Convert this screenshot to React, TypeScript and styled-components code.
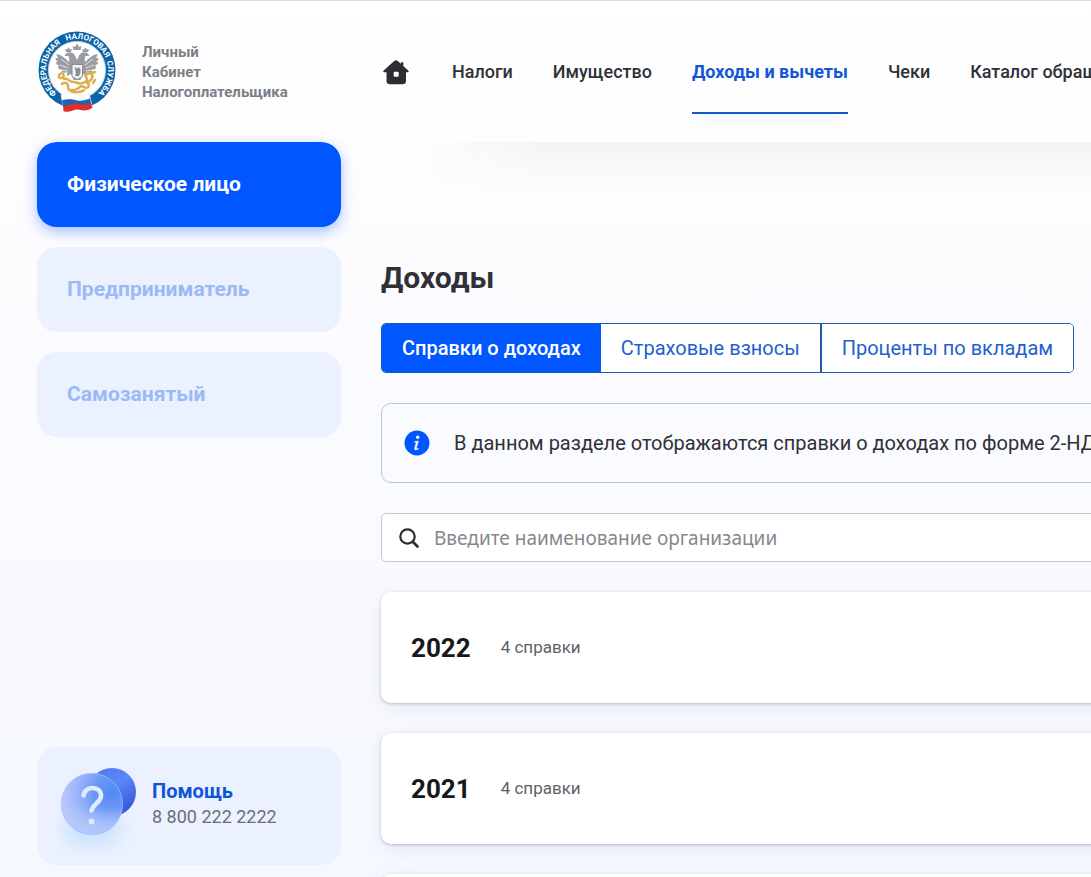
import React from "react";
import styled, { createGlobalStyle, css } from "styled-components";

const Global = createGlobalStyle`
  *, *::before, *::after { box-sizing: border-box; }
  html { min-height: 100%; background: linear-gradient(#ffffff 0, #fcfcff 30%, #f5f8ff 100%); }
  body {
    margin: 0;
    overflow: hidden;
    font-family: Roboto, "Liberation Sans", sans-serif;
    color: #2f3136;
  }
  button, input { font-family: inherit; }
  a { text-decoration: none; color: inherit; }
`;

const Page = styled.div`
  height: 100vh;
  min-width: 1400px;
  display: grid;
  grid-template-columns: 341px minmax(0, 1fr);
  grid-template-rows: minmax(0, 1fr);
  column-gap: 40px;
  padding-right: 40px;
  border-top: 1px solid #dcdddf;
  overflow: hidden;
`;

const Sidebar = styled.aside`
  display: flex;
  flex-direction: column;
  min-height: 0;
  padding: 0 0 12px 37px;
`;

const Brand = styled.a`
  display: flex;
  align-items: center;
  gap: 26px;
  height: 141px;
  flex: none;
`;

const BrandName = styled.span`
  font-size: 15px;
  line-height: 20px;
  font-weight: 700;
  color: #7c7f85;
`;

const RoleList = styled.nav`
  display: flex;
  flex-direction: column;
  gap: 20px;
`;

const Role = styled.button<{ $active?: boolean }>`
  height: 85px;
  padding: 0 30px 2px;
  border: 0;
  border-radius: 20px;
  text-align: left;
  font-size: 21px;
  font-weight: 700;
  color: #9bbaf5;
  background: #ebf1fe;
  ${(p) =>
    p.$active &&
    css`
      color: #fff;
      background: #0057ff;
      box-shadow: 0 5px 14px rgba(0, 87, 255, 0.35);
    `}
`;

const HelpCard = styled.a`
  display: flex;
  align-items: center;
  gap: 16px;
  height: 118px;
  margin-top: auto;
  padding-left: 18px;
  border-radius: 20px;
  background: #ebf1fe;
  flex: none;
`;

const HelpText = styled.span`
  display: flex;
  flex-direction: column;
  padding-bottom: 4px;
  font-size: 18px;
  line-height: 26px;
  color: #6b6e75;
`;

const HelpTitle = styled.strong`
  font-size: 20px;
  font-weight: 700;
  color: #0f55d8;
`;

const Main = styled.main`
  min-width: 0;
`;

const TopNav = styled.nav`
  display: flex;
  align-items: center;
  gap: 40px;
  height: 141px;
  white-space: nowrap;
`;

const NavLink = styled.a<{ $active?: boolean }>`
  display: flex;
  align-items: center;
  height: 84px;
  padding-top: 2px;
  font-size: 18px;
  font-weight: 500;
  border-bottom: 2px solid transparent;
  ${(p) =>
    p.$active &&
    css`
      color: #1456d8;
      font-weight: 700;
      border-bottom-color: #1456cc;
      box-shadow: 0 14px 14px -8px rgba(0, 87, 255, 0.06);
    `}
`;

const HomeLink = styled.a`
  display: flex;
  margin-right: 1px;
`;

const NavShade = styled.div`
  height: 50px;
  margin: 0 -40px 0 40px;
  background: linear-gradient(rgba(40, 40, 50, 0.045), rgba(40, 40, 50, 0));
  mask-image: linear-gradient(90deg, transparent, #000 120px);
`;

const Title = styled.h1`
  margin: 66px 0 25px;
  font-size: 30px;
  line-height: 40px;
  font-weight: 700;
`;

const Tabs = styled.div`
  display: flex;
  width: fit-content;
  height: 50px;
  border: 1px solid #1b5cab;
  border-radius: 5px;
  overflow: hidden;
`;

const Tab = styled.button<{ $active?: boolean }>`
  padding: 0 20px;
  border: 0;
  border-right: 2px solid #1b5cab;
  font-size: 20px;
  background: #fff;
  color: #1f5fd0;
  &:last-child {
    border-right: 0;
  }
  ${(p) =>
    p.$active &&
    css`
      color: #fff;
      background: #0057ff;
      border-right: 0;
      font-weight: 500;
    `}
`;

const Notice = styled.div`
  display: flex;
  align-items: center;
  gap: 24px;
  height: 80px;
  margin-top: 30px;
  padding-left: 22px;
  border: 1px solid #b4c9dc;
  border-radius: 10px;
  font-size: 20px;
  white-space: nowrap;
`;

const Search = styled.label`
  display: flex;
  align-items: center;
  gap: 14px;
  height: 49px;
  margin-top: 30px;
  padding-left: 16px;
  border: 1px solid #c6c8cc;
  border-radius: 5px;
  background: #fff;
`;

const SearchInput = styled.input`
  flex: 1;
  padding: 0;
  border: 0;
  outline: 0;
  background: transparent;
  font-family: "Noto Sans", "Open Sans", sans-serif;
  font-size: 19px;
  &::placeholder {
    color: #85888c;
    opacity: 1;
  }
`;

const YearCard = styled.section`
  display: flex;
  align-items: center;
  gap: 30px;
  height: 111px;
  margin-top: 30px;
  padding-left: 30px;
  border-radius: 10px;
  background: #fff;
  box-shadow: 0 1px 3px rgba(20, 25, 40, 0.24), 0 5px 20px rgba(20, 25, 50, 0.07);
`;

const Year = styled.h2`
  margin: 0;
  font-size: 26px;
  font-weight: 700;
  color: #17181a;
`;

const Count = styled.span`
  padding-bottom: 2px;
  font-size: 17px;
  color: #5f6267;
`;

const Emblem = () => (
  <svg width="79" height="84" viewBox="0 0 79 84" role="img" aria-label="ФНС">
    <defs>
      <path id="ring" d="M19.700 63.400 A31 31 0 1 1 61.100 62.700" />
    </defs>
    <circle cx="40" cy="40" r="38.5" fill="#0b64a8" />
    <circle cx="40" cy="40" r="28.6" fill="#fff" stroke="#b9cfe2" strokeWidth="1" />
    <g fill="#fff" fontFamily="Roboto, sans-serif" fontSize="8" fontWeight="700">
      <text><textPath href="#ring">ФЕДЕРАЛЬНАЯ</textPath></text>
      <text><textPath href="#ring" startOffset="43%">НАЛОГОВАЯ</textPath></text>
      <text><textPath href="#ring" startOffset="77%">СЛУЖБА</textPath></text>
    </g>
    <g fill="#9a9da2">
      <path d="M38.500 27c-1-4-5-6-9-4l-2 3 4 0c1 2 1 4 0 6-3-4-7-7-12-8 0 2 1 3 2 4l-3 0c0 2 1 3 3 4l-3 0c1 2 2 3 4 4l-2 1c1 2 3 3 5 3l-1 2c2 1 4 1 6 0l-1 4 5-2 2 6h7l2-6 5 2-1-4c2 1 4 1 6 0l-1-2c2 0 4-1 5-3l-2-1c2-1 3-2 4-4l-3 0c2-1 3-2 3-4l-3 0c1-1 2-2 2-4-5 1-9 4-12 8-1-2-1-4 0-6l4 0-2-3c-4-2-8 0-9 4l-1.500 3z" />
      <path d="M36.500 20l-1-4 2.500 1 2-3.500 2 3.500 2.500-1-1 4zM29 22l-1-3 2 .4 1.500-2 1.500 2 2-.4-1 3zM46 22l-1-3 2 .4 1.500-2 1.500 2 2-.4-1 3z" />
    </g>
    <path d="M32 35l-8-6M31 38l-8-3M31 41l-7-1M48 35l8-6M49 38l8-3M49 41l7-1" stroke="#fff" strokeWidth=".7" />
    <g fill="none" stroke="#dfae4c" strokeWidth="2.500" strokeLinecap="round" strokeLinejoin="round">
      <path d="M22 45c3-4 6 0 4 2s-5 1-4-2M27 49c4-2 4 3 9 3s6 3 10 1 5-3 3-6 4-5 6-2-2 6-5 8" />
      <path d="M25 54c3-3 7 0 6 3s5 4 9 2 3-4 7-2 6-1 4-4M55 43l3-1M58 50l-2 3" />
      <path d="M32 60c4 3 11 3 15 0" />
    </g>
    <path d="M35 34.500h10.500v12l-5.300 3-5.200-3z" fill="#f4f4f4" stroke="#898c92" />
    <path d="M37.500 37l3 1.500 1-1.500 2 2 0 3-1.500 4h-4l1-3z" fill="#8b8f95" />
    <path d="M24 65c7-4 12-1 17 0 5 1 8 0 11-2l3 13c-6 4-10 1-15 1-5-1-8 4-13 3z" fill="#fff" stroke="#e3ebf3" strokeWidth=".8" />
    <path d="M25 70.500c6-2 11-1 15 0 6 1 9-1 13-2l1 5c-4 3-9 2-14 1-5-1-8 3-14 2z" fill="#1b63b4" />
    <path d="M26 75.500c6 1 9-3 14-2 5 1 10 2 14-1l1.500 5c-5 4-10 3-15 2-5 0-9 4-14 1.500z" fill="#da2f2c" />
  </svg>
);

const HomeIcon = () => (
  <svg width="30" height="28" viewBox="0 0 30 28" aria-hidden="true">
    <path d="M13.200 3a2.600 2.600 0 0 1 3.500 0l3.300 2.800V4.200h2.300v3.700l4.900 4.600c.9.900.5 1.800-.4 1.800H25V22.700a3.500 3.500 0 0 1-3.500 3.500H9A3.500 3.500 0 0 1 5.500 22.700v-8.400H3.200c-1 0-1.300-1-.5-1.800z" fill="#2c2e33" />
    <rect x="12.700" y="13.700" width="5" height="5" rx="1" fill="#fff" />
  </svg>
);

const InfoIcon = () => (
  <svg width="26" height="26" viewBox="0 0 26 26" aria-hidden="true">
    <circle cx="13" cy="13" r="12.500" fill="#0057ff" />
    <circle cx="13.700" cy="7.200" r="1.700" fill="#fff" />
    <path d="M10.800 11.600l1.800-.4h1.800L12.300 18c-.2 1.200.6 1 1.700.1l.5.5c-1.600 1.700-4.300 2-3.800-.7l1.600-5.600h-1.600z" fill="#fff" stroke="#fff" strokeWidth=".5" />
  </svg>
);

const SearchIcon = () => (
  <svg width="22" height="22" viewBox="0 0 22 22" aria-hidden="true">
    <circle cx="9.500" cy="9.500" r="7.200" fill="none" stroke="#2c2e33" strokeWidth="2.200" />
    <path d="M14.800 14.800l4.700 4.700" stroke="#2c2e33" strokeWidth="2.800" strokeLinecap="round" />
  </svg>
);

const HelpIcon = () => (
  <svg width="81" height="100" viewBox="0 0 81 100" aria-hidden="true">
    <defs>
      <linearGradient id="back" x1="0" y1="0" x2=".6" y2="1">
        <stop offset="0" stopColor="#4c78e4" />
        <stop offset=".5" stopColor="#5b88f8" />
        <stop offset="1" stopColor="#3558dd" />
      </linearGradient>
      <radialGradient id="front" cx=".82" cy=".32" r=".8">
        <stop offset="0" stopColor="#5488f5" />
        <stop offset=".35" stopColor="#6a97f7" />
        <stop offset=".75" stopColor="#a3b8fa" />
        <stop offset="1" stopColor="#b8c6fb" />
      </radialGradient>
      <linearGradient id="fade" x1="0" y1="0" x2="0" y2="1">
        <stop offset=".55" stopColor="#b8ccfb" stopOpacity="0" />
        <stop offset="1" stopColor="#b3c8fb" stopOpacity=".9" />
      </linearGradient>
      <filter id="glow" x="-50%" y="-50%" width="200%" height="200%">
        <feGaussianBlur stdDeviation="9" />
      </filter>
    </defs>
    <ellipse cx="37" cy="72" rx="30" ry="18" fill="#b4d8ff" opacity=".6" filter="url(#glow)" />
    <circle cx="57" cy="36" r="24" fill="url(#back)" />
    <circle cx="37" cy="48" r="31" fill="url(#front)" />
    <circle cx="37" cy="48" r="30.500" fill="url(#fade)" stroke="#a9c0fb" strokeOpacity=".6" />
    <path d="M28.500 39.500c2-10.500 17.500-9.500 17.500 0 0 7-7.500 7.500-9.500 15" fill="none" stroke="#dfecff" strokeWidth="4.600" strokeLinecap="round" />
    <circle cx="36.500" cy="65.500" r="3" fill="#dfecff" />
  </svg>
);

const roles = ["Физическое лицо", "Предприниматель", "Самозанятый"];
const links = ["Налоги", "Имущество", "Доходы и вычеты", "Чеки", "Каталог обращений"];
const tabs = ["Справки о доходах", "Страховые взносы", "Проценты по вкладам"];
const years = [2022, 2021, 2020];

export default function App() {
  return (
    <Page>
      <Global />
      <Sidebar>
        <Brand href="#">
          <Emblem />
          <BrandName>
            Личный
            <br />
            Кабинет
            <br />
            Налогоплательщика
          </BrandName>
        </Brand>
        <RoleList>
          {roles.map((r, i) => (
            <Role key={r} $active={i === 0}>{r}</Role>
          ))}
        </RoleList>
        <HelpCard href="#">
          <HelpIcon />
          <HelpText>
            <HelpTitle>Помощь</HelpTitle>
            8 800 222 2222
          </HelpText>
        </HelpCard>
      </Sidebar>
      <Main>
        <TopNav>
          <HomeLink href="#" aria-label="Главная">
            <HomeIcon />
          </HomeLink>
          {links.map((l, i) => (
            <NavLink key={l} href="#" $active={i === 2}>{l}</NavLink>
          ))}
        </TopNav>
        <NavShade />
        <Title>Доходы</Title>
        <Tabs>
          {tabs.map((t, i) => (
            <Tab key={t} $active={i === 0}>{t}</Tab>
          ))}
        </Tabs>
        <Notice>
          <InfoIcon />
          В данном разделе отображаются справки о доходах по форме 2-НДФЛ
        </Notice>
        <Search>
          <SearchIcon />
          <SearchInput placeholder="Введите наименование организации" aria-label="Наименование организации" />
        </Search>
        {years.map((y) => (
          <YearCard key={y}>
            <Year>{y}</Year>
            <Count>4 справки</Count>
          </YearCard>
        ))}
      </Main>
    </Page>
  );
}
